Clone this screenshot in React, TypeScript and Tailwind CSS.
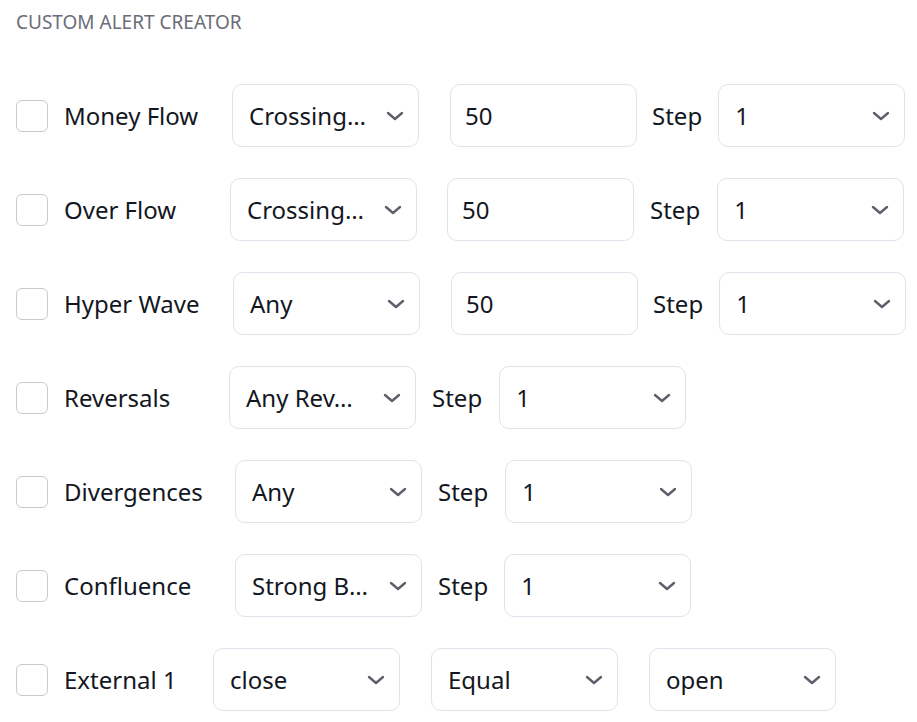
import type { ReactNode } from "react";

type Control =
  | { kind: "select"; value: string; gap: string }
  | { kind: "input"; value: string; gap: string }
  | { kind: "step"; gap: string };

type Row = { label: string; labelW: string; controls: Control[] };

const rows: Row[] = [
  {
    label: "Money Flow",
    labelW: "w-[137px]",
    controls: [
      { kind: "select", value: "Crossing…", gap: "ml-[31px]" },
      { kind: "input", value: "50", gap: "ml-[31px]" },
      { kind: "step", gap: "ml-[15px]" },
      { kind: "select", value: "1", gap: "ml-[16px]" },
    ],
  },
  {
    label: "Over Flow",
    labelW: "w-[135px]",
    controls: [
      { kind: "select", value: "Crossing…", gap: "ml-[31px]" },
      { kind: "input", value: "50", gap: "ml-[30px]" },
      { kind: "step", gap: "ml-[16px]" },
      { kind: "select", value: "1", gap: "ml-[17px]" },
    ],
  },
  {
    label: "Hyper Wave",
    labelW: "w-[138px]",
    controls: [
      { kind: "select", value: "Any", gap: "ml-[31px]" },
      { kind: "input", value: "50", gap: "ml-[31px]" },
      { kind: "step", gap: "ml-[15px]" },
      { kind: "select", value: "1", gap: "ml-[16px]" },
    ],
  },
  {
    label: "Reversals",
    labelW: "w-[134px]",
    controls: [
      { kind: "select", value: "Any Rev…", gap: "ml-[31px]" },
      { kind: "step", gap: "ml-[16px]" },
      { kind: "select", value: "1", gap: "ml-[17px]" },
    ],
  },
  {
    label: "Divergences",
    labelW: "w-[140px]",
    controls: [
      { kind: "select", value: "Any", gap: "ml-[31px]" },
      { kind: "step", gap: "ml-[16px]" },
      { kind: "select", value: "1", gap: "ml-[17px]" },
    ],
  },
  {
    label: "Confluence",
    labelW: "w-[140px]",
    controls: [
      { kind: "select", value: "Strong B…", gap: "ml-[31px]" },
      { kind: "step", gap: "ml-[16px]" },
      { kind: "select", value: "1", gap: "ml-[16px]" },
    ],
  },
  {
    label: "External 1",
    labelW: "w-[118px]",
    controls: [
      { kind: "select", value: "close", gap: "ml-[31px]" },
      { kind: "select", value: "Equal", gap: "ml-[31px]" },
      { kind: "select", value: "open", gap: "ml-[31px]" },
    ],
  },
];

const Chevron = () => (
  <svg width="18" height="10" viewBox="0 0 18 10" fill="none" className="shrink-0">
    <polyline points="2,2 9,8 16,2" stroke="#5d606b" strokeWidth="2.4" strokeLinecap="round" strokeLinejoin="round" />
  </svg>
);

const Box = ({ children, className }: { children: ReactNode; className: string }) => (
  <div
    className={`flex h-[63px] w-[187px] shrink-0 items-center justify-between rounded-[10px] border border-[#e0e3eb] bg-white pl-4 pr-[14px] ${className}`}
  >
    {children}
  </div>
);

export default function App() {
  return (
    <div
      className="min-h-screen bg-white px-4 pt-[9px] text-[#131722]"
      style={{ fontFamily: '"Noto Sans", "Open Sans", sans-serif' }}
    >
      <h1 className="text-[19px] leading-[26px] font-normal text-[#6a6d78] uppercase">
        Custom Alert Creator
      </h1>
      <div className="mt-[49px] flex flex-col gap-[31px]">
        {rows.map((row) => (
          <div key={row.label} className="flex items-center text-[24px] leading-none">
            <span className="h-8 w-8 shrink-0 rounded-md border border-[#c9cbd3] bg-white" />
            <span className={`ml-4 shrink-0 whitespace-nowrap ${row.labelW}`}>{row.label}</span>
            {row.controls.map((c, i) => {
              if (c.kind === "step") {
                return (
                  <span key={i} className={`shrink-0 ${c.gap}`}>
                    Step
                  </span>
                );
              }
              if (c.kind === "input") {
                return (
                  <Box key={i} className={`pl-[14px] ${c.gap}`}>
                    <span>{c.value}</span>
                  </Box>
                );
              }
              return (
                <Box key={i} className={c.gap}>
                  <span className="whitespace-nowrap">{c.value}</span>
                  <Chevron />
                </Box>
              );
            })}
          </div>
        ))}
      </div>
    </div>
  );
}
